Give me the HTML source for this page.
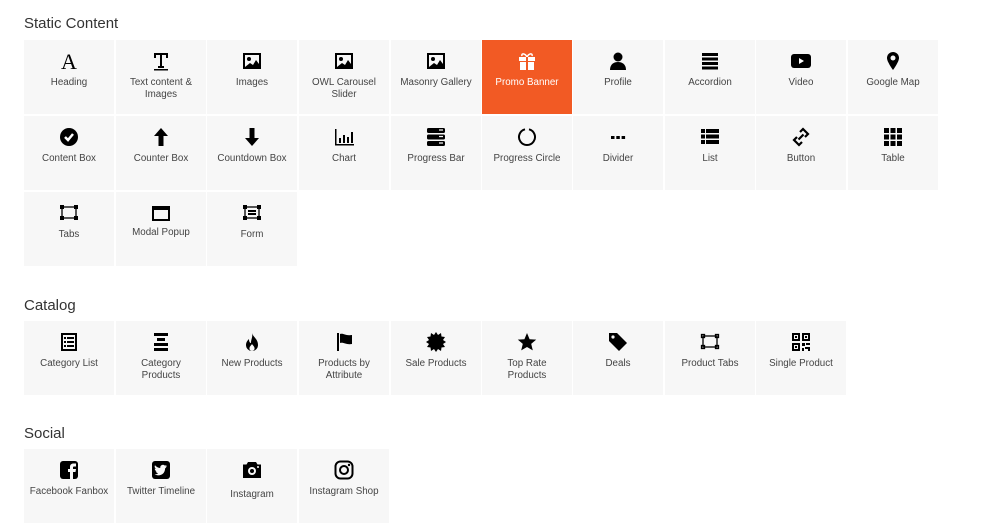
<!DOCTYPE html>
<html><head><meta charset="utf-8"><style>
body{margin:0;background:#fff;font-family:"Liberation Sans",sans-serif;width:1008px;height:529px;overflow:hidden;position:relative}
h2{position:absolute;left:24px;margin:0;font-size:15px;font-weight:normal;color:#333}
.t{position:absolute;width:90px;height:74px;background:#f7f7f7;text-align:center;color:#444;font-size:9.8px;line-height:12px}
.t svg{position:absolute;left:35px;top:11px;width:20px;height:20px}
.t span{position:absolute;left:0;right:0;top:37px;white-space:nowrap}
.o{background:#f25a24;color:#fff}
</style></head><body>
<h2 style="top:15px">Static Content</h2>
<h2 style="top:297px">Catalog</h2>
<h2 style="top:425px">Social</h2>

<div class="t" style="left:24px;top:40px"><svg viewBox="0 0 20 20"><text x="10" y="18" font-size="22" text-anchor="middle" font-family="Liberation Serif">A</text></svg><span>Heading</span></div>
<div class="t" style="left:116px;top:40px"><svg viewBox="0 0 20 20"><path d="M3 2h14v5h-2V4h-4v11h2v2H7v-2h2V4H5v3H3z" /><rect x="3" y="18" width="14" height="1.5"/></svg><span>Text content &amp;<br>Images</span></div>
<div class="t" style="left:207px;top:40px"><svg viewBox="0 0 20 20"><path d="M1 2h18v16H1zM3 4v12h14V4z"/><circle cx="7" cy="8" r="2"/><path d="M3 16l5-4 3 2 3-5 3 4v3z"/></svg><span>Images</span></div>
<div class="t" style="left:299px;top:40px"><svg viewBox="0 0 20 20"><path d="M1 2h18v16H1zM3 4v12h14V4z"/><circle cx="7" cy="8" r="2"/><path d="M3 16l5-4 3 2 3-5 3 4v3z"/></svg><span>OWL Carousel<br>Slider</span></div>
<div class="t" style="left:391px;top:40px"><svg viewBox="0 0 20 20"><path d="M1 2h18v16H1zM3 4v12h14V4z"/><circle cx="7" cy="8" r="2"/><path d="M3 16l5-4 3 2 3-5 3 4v3z"/></svg><span>Masonry Gallery</span></div>
<div class="t o" style="left:482px;top:40px"><svg viewBox="0 0 20 20" fill="#fff"><path d="M2 6h16v4H2zM3 11h14v8H3z"/><path d="M10 6C8 2 4 2 5 5M10 6c2-4 6-4 5-1" stroke="#fff" stroke-width="1.5" fill="none"/><rect x="9" y="6" width="2" height="13" fill="#f25a24"/></svg><span>Promo Banner</span></div>
<div class="t" style="left:573px;top:40px"><svg viewBox="0 0 20 20"><circle cx="10" cy="6" r="4.5"/><path d="M2 19c0-6 4-8 8-8s8 2 8 8z"/></svg><span>Profile</span></div>
<div class="t" style="left:665px;top:40px"><svg viewBox="0 0 20 20"><path d="M2 2h16v3H2zM2 6.5h16v3H2zM2 11h16v3H2zM2 15.5h16v3H2z"/></svg><span>Accordion</span></div>
<div class="t" style="left:756px;top:40px"><svg viewBox="0 0 20 20"><rect x="0" y="3" width="20" height="14" rx="3"/><path d="M8 7v6l5-3z" fill="#fff"/></svg><span>Video</span></div>
<div class="t" style="left:848px;top:40px"><svg viewBox="0 0 20 20"><path d="M10 1a6 6 0 0 1 6 6c0 4-6 12-6 12S4 11 4 7a6 6 0 0 1 6-6z"/><circle cx="10" cy="7" r="2.5" fill="#f7f7f7"/></svg><span>Google Map</span></div>

<div class="t" style="left:24px;top:116px"><svg viewBox="0 0 20 20"><circle cx="10" cy="10" r="9"/><path d="M6 10l3 3 5-6" stroke="#fff" stroke-width="2.5" fill="none"/></svg><span>Content Box</span></div>
<div class="t" style="left:116px;top:116px"><svg viewBox="0 0 20 20"><path d="M10 1l7 8h-4.5v10h-5V9H3z"/></svg><span>Counter Box</span></div>
<div class="t" style="left:207px;top:116px"><svg viewBox="0 0 20 20"><path d="M10 19l7-8h-4.5V1h-5v10H3z"/></svg><span>Countdown Box</span></div>
<div class="t" style="left:299px;top:116px"><svg viewBox="0 0 20 20"><path d="M1 2h1.5v15H20v1.5H1z"/><path d="M5 11h2v5H5zM9 8h2v8H9zM13 10h2v6h-2zM17 5h2v11h-2z"/></svg><span>Chart</span></div>
<div class="t" style="left:391px;top:116px"><svg viewBox="0 0 20 20"><rect x="1" y="1" width="18" height="5" rx="1.5"/><rect x="1" y="7.5" width="18" height="5" rx="1.5"/><rect x="1" y="14" width="18" height="5" rx="1.5"/><path d="M13 3h4M13 9.5h4M13 16h4" stroke="#f7f7f7" stroke-width="1.2"/></svg><span>Progress Bar</span></div>
<div class="t" style="left:482px;top:116px"><svg viewBox="0 0 20 20"><path d="M12 2.3A8 8 0 1 1 8 2.3" stroke="#000" stroke-width="2" fill="none"/></svg><span>Progress Circle</span></div>
<div class="t" style="left:573px;top:116px"><svg viewBox="0 0 20 20"><rect x="3" y="9" width="3.5" height="3"/><rect x="8.3" y="9" width="3.5" height="3"/><rect x="13.6" y="9" width="3.5" height="3"/></svg><span>Divider</span></div>
<div class="t" style="left:665px;top:116px"><svg viewBox="0 0 20 20"><path d="M1 2h4v4H1zM6 2h13v4H6zM1 7.5h4v4H1zM6 7.5h13v4H6zM1 13h4v4H1zM6 13h13v4H6z"/></svg><span>List</span></div>
<div class="t" style="left:756px;top:116px"><svg viewBox="0 0 20 20"><g stroke="#000" stroke-width="2.2" fill="none"><path d="M9 5l3-3 5 5-3 3"/><path d="M11 15l-3 3-5-5 3-3"/><path d="M7.5 12.5l5-5"/></g></svg><span>Button</span></div>
<div class="t" style="left:848px;top:116px"><svg viewBox="0 0 20 20"><path d="M1 1h5v5H1zM7.5 1h5v5h-5zM14 1h5v5h-5zM1 7.5h5v5H1zM7.5 7.5h5v5h-5zM14 7.5h5v5h-5zM1 14h5v5H1zM7.5 14h5v5h-5zM14 14h5v5h-5z"/></svg><span>Table</span></div>

<div class="t" style="left:24px;top:192px"><svg viewBox="0 0 20 20"><g stroke="#000" stroke-width="1.3" fill="none"><rect x="3" y="4" width="14" height="11"/></g><path d="M1 2h4v4H1zM15 2h4v4h-4zM1 13h4v4H1zM15 13h4v4h-4z"/></svg><span>Tabs</span></div>
<div class="t" style="left:116px;top:192px"><svg viewBox="0 0 20 20"><path d="M1 3h18v15H1zM3 7v9h14V7z"/></svg><span style="top:35px">Modal Popup</span></div>
<div class="t" style="left:207px;top:192px"><svg viewBox="0 0 20 20"><g stroke="#000" stroke-width="1.3" fill="none"><rect x="3" y="4" width="14" height="11"/></g><path d="M1 2h4v4H1zM15 2h4v4h-4zM1 13h4v4H1zM15 13h4v4h-4zM6 7h8v2H6zM6 10h8v2H6z"/></svg><span>Form</span></div>

<div class="t" style="left:24px;top:321px"><svg viewBox="0 0 20 20"><path d="M2 1h16v18H2zM4 3v14h12V3z"/><path d="M5 5h2v2H5zM8 5h7v2H8zM5 9h2v2H5zM8 9h7v2H8zM5 13h2v2H5zM8 13h7v2H8z"/></svg><span>Category List</span></div>
<div class="t" style="left:116px;top:321px"><svg viewBox="0 0 20 20"><path d="M3 1h14v3H3zM6 6h8v3H6zM3 11h14v3H3zM3 16h14v3H3z"/></svg><span>Category<br>Products</span></div>
<div class="t" style="left:207px;top:321px"><svg viewBox="0 0 20 20"><path d="M10 1c1 4 6 6 6 12a6 6 0 0 1-12 0c0-3 2-5 3-6 0 3 1 4 2 4 0-4 2-6 1-10z"/><path d="M10 19a2.5 2.5 0 0 1-2.5-3c0-1.5 2-3 2.5-4 .5 1 2.5 2.5 2.5 4a2.5 2.5 0 0 1-2.5 3z" fill="#f7f7f7"/></svg><span>New Products</span></div>
<div class="t" style="left:299px;top:321px"><svg viewBox="0 0 20 20"><path d="M3 1h2v18H3z"/><path d="M6 2c4-1 5 2 12 1v9c-6 1-8-2-12-1z"/></svg><span>Products by<br>Attribute</span></div>
<div class="t" style="left:391px;top:321px"><svg viewBox="0 0 20 20"><path d="M10 0l2 3 3-2 .5 3.5 3.5.5-2 3 3 2-3 2 2 3-3.5.5-.5 3.5-3-2-2 3-2-3-3 2-.5-3.5-3.5-.5 2-3-3-2 3-2-2-3 3.5-.5L5 1l3 2z"/></svg><span>Sale Products</span></div>
<div class="t" style="left:482px;top:321px"><svg viewBox="0 0 20 20"><path d="M10 1l2.6 6.2 6.6.4-5 4.3 1.6 6.5L10 15l-5.8 3.4 1.6-6.5-5-4.3 6.6-.4z"/></svg><span>Top Rate<br>Products</span></div>
<div class="t" style="left:573px;top:321px"><svg viewBox="0 0 20 20"><path d="M1 1h8l10 10-8 8L1 9z"/><circle cx="5" cy="5" r="1.6" fill="#f7f7f7"/></svg><span>Deals</span></div>
<div class="t" style="left:665px;top:321px"><svg viewBox="0 0 20 20"><g stroke="#000" stroke-width="1.3" fill="none"><rect x="3" y="4" width="14" height="11"/><rect x="1.5" y="2.5" width="3" height="3"/><rect x="15.5" y="2.5" width="3" height="3"/><rect x="1.5" y="13.5" width="3" height="3"/><rect x="15.5" y="13.5" width="3" height="3"/></g></svg><span>Product Tabs</span></div>
<div class="t" style="left:756px;top:321px"><svg viewBox="0 0 20 20"><path d="M1 1h8v8H1zM3 3v4h4V3zM11 1h8v8h-8zM13 3v4h4V3zM1 11h8v8H1zM3 13v4h4v-4zM4 4h2v2H4zM14 4h2v2h-2zM4 14h2v2H4zM11 11h3v3h-3zM15 11h4v2h-4zM14 15h5v4h-2v-2h-3zM11 16h2v3h-2z"/></svg><span>Single Product</span></div>

<div class="t" style="left:24px;top:449px"><svg viewBox="0 0 20 20"><rect x="1" y="1" width="18" height="18" rx="3"/><path d="M11 19v-7H9v-3h2V7c0-2.5 1.5-3.5 3.5-3.5H17v3h-2c-.8 0-1 .4-1 1V9h3l-.5 3H14v7z" fill="#f7f7f7"/></svg><span>Facebook Fanbox</span></div>
<div class="t" style="left:116px;top:449px"><svg viewBox="0 0 20 20"><rect x="1" y="1" width="18" height="18" rx="3"/><path d="M16 6c-.5.3-1 .4-1.5.5.6-.4.9-.9 1.1-1.5-.5.3-1.1.5-1.7.6A2.7 2.7 0 0 0 9.3 8C7 7.9 5.2 6.8 4 5.3c-.7 1.3-.2 2.8.9 3.6-.4 0-.8-.1-1.200-.3 0 1.3 1 2.4 2.2 2.7-.4.1-.8.1-1.2 0 .3 1.1 1.4 1.9 2.5 1.9A5.5 5.5 0 0 1 3.5 14.3c4.4 2.6 10.5.4 10.6-5.9.7-.5 1.3-1.3 1.9-2.4z" fill="#f7f7f7"/></svg><span>Twitter Timeline</span></div>
<div class="t" style="left:207px;top:449px"><svg viewBox="0 0 20 20"><path d="M6 2h8l1.5 2.5H19V18H1V4.5h3.5z"/><circle cx="10" cy="11" r="4" fill="#f7f7f7"/><circle cx="10" cy="11" r="2"/><circle cx="16" cy="7" r="1" fill="#f7f7f7"/></svg><span style="top:40px">Instagram</span></div>
<div class="t" style="left:299px;top:449px"><svg viewBox="0 0 20 20"><rect x="1.5" y="1.5" width="17" height="17" rx="5" stroke="#000" stroke-width="2" fill="none"/><circle cx="10" cy="10" r="4" stroke="#000" stroke-width="2" fill="none"/><circle cx="15" cy="5" r="1.2"/></svg><span>Instagram Shop</span></div>
</body></html>
